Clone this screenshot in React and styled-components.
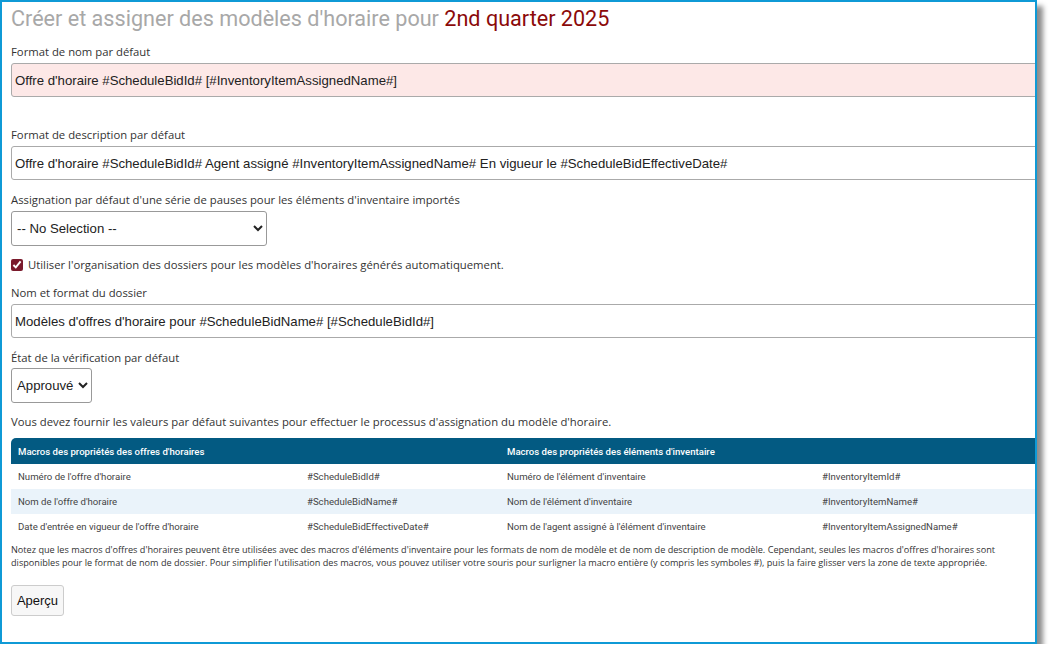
import React from 'react';
import styled, { createGlobalStyle } from 'styled-components';

const GlobalStyle = createGlobalStyle`
  html, body { margin: 0; padding: 0; background: #fff; }
  body { font-family: "Open Sans", "Liberation Sans", sans-serif; color: #333; }
`;

const Frame = styled.div`
  width: 1037px;
  height: 644px;
  box-sizing: border-box;
  border: 2px solid #0f9ad6;
  box-shadow: 6px 6px 5px rgba(0, 0, 0, 0.45);
  overflow: hidden;
  padding: 4px 0 0 9px;
  background: #fff;
`;

const Title = styled.h1`
  margin: 0 0 12px;
  font-family: Roboto, "Liberation Sans", sans-serif;
  font-weight: 400;
  font-size: 21.6px;
  line-height: 26px;
  color: #a8a8a8;
  white-space: nowrap;
`;

const Period = styled.span`
  color: #8b0a0a;
`;

const Field = styled.div`
  display: flex;
  flex-direction: column;
  align-items: flex-start;
  margin-bottom: ${p => p.$space || 12}px;
`;

const Label = styled.label`
  font-size: 11.3px;
  line-height: 16px;
  color: #333;
  margin-bottom: ${p => p.$gap ?? 3}px;
`;

const TextInput = styled.input`
  box-sizing: border-box;
  width: 1060px;
  height: 34px;
  padding: 0 3px;
  font-family: "Liberation Sans", Arial, sans-serif;
  font-size: 13.2px;
  color: #222;
  border: 1px solid #aaa;
  border-radius: 3px;
  background: ${p => (p.$invalid ? '#fde8e7' : '#fff')};
  outline: none;
`;

const Select = styled.select`
  box-sizing: border-box;
  width: ${p => p.$width}px;
  height: 35px;
  padding: 0 1px;
  font-family: "Liberation Sans", Arial, sans-serif;
  font-size: 13.2px;
  color: #222;
  border: 1px solid #999;
  border-radius: 3px;
  background: #fff;
`;

const CheckRow = styled.label`
  display: flex;
  align-items: center;
  gap: 5px;
  font-size: 11.3px;
  line-height: 16px;
  color: #333;
  margin-bottom: 12px;
`;

const Check = styled.input`
  margin: 0;
  width: 12px;
  height: 12px;
  accent-color: #7a1a2c;
`;

const Info = styled.p`
  margin: 0 0 8px;
  font-size: 11.3px;
  line-height: 16px;
  color: #333;
  white-space: nowrap;
`;

const Table = styled.table`
  width: 1040px;
  border-collapse: collapse;
  font-family: Roboto, "Liberation Sans", sans-serif;
  font-size: 9.6px;
  color: #444;
`;

const HeadCell = styled.th`
  background: #035a82;
  color: #fff;
  font-weight: 500;
  text-align: left;
  height: 26px;
  padding: 0 7px;
  &:first-child { border-top-left-radius: 5px; }
`;

const Row = styled.tr`
  background: ${p => (p.$striped ? '#eaf3fa' : '#fff')};
`;

const Cell = styled.td`
  height: 25px;
  padding: 0 7px;
  width: ${p => p.$w}px;
`;

const Note = styled.p`
  margin: 4px 0 16px;
  width: 1005px;
  font-size: 9.15px;
  line-height: 13px;
  color: #333;
`;

const Button = styled.button`
  width: 53px;
  height: 31px;
  padding: 0;
  font-family: "Liberation Sans", Arial, sans-serif;
  font-size: 13px;
  color: #111;
  background: #f7f7f7;
  border: 1px solid #ccc;
  border-radius: 3px;
`;

const rows = [
  ["Numéro de l'offre d'horaire", '#ScheduleBidId#', "Numéro de l'élément d'inventaire", '#InventoryItemId#'],
  ["Nom de l'offre d'horaire", '#ScheduleBidName#', "Nom de l'élément d'inventaire", '#InventoryItemName#'],
  ["Date d'entrée en vigueur de l'offre d'horaire", '#ScheduleBidEffectiveDate#', "Nom de l'agent assigné à l'élément d'inventaire", '#InventoryItemAssignedName#'],
];

export default function App() {
  return (
    <>
      <GlobalStyle />
      <Frame>
        <Title>
          Créer et assigner des modèles d'horaire pour <Period>2nd quarter 2025</Period>
        </Title>

        <Field $space={30}>
          <Label>Format de nom par défaut</Label>
          <TextInput $invalid readOnly value="Offre d'horaire #ScheduleBidId# [#InventoryItemAssignedName#]" />
        </Field>

        <Field>
          <Label>Format de description par défaut</Label>
          <TextInput readOnly value="Offre d'horaire #ScheduleBidId# Agent assigné #InventoryItemAssignedName# En vigueur le #ScheduleBidEffectiveDate#" />
        </Field>

        <Field $space={11}>
          <Label>Assignation par défaut d'une série de pauses pour les éléments d'inventaire importés</Label>
          <Select $width={256} defaultValue="none">
            <option value="none">-- No Selection --</option>
          </Select>
        </Field>

        <CheckRow>
          <Check type="checkbox" defaultChecked />
          Utiliser l'organisation des dossiers pour les modèles d'horaires générés automatiquement.
        </CheckRow>

        <Field>
          <Label>Nom et format du dossier</Label>
          <TextInput readOnly value="Modèles d'offres d'horaire pour #ScheduleBidName# [#ScheduleBidId#]" />
        </Field>

        <Field $space={11}>
          <Label $gap={2}>État de la vérification par défaut</Label>
          <Select $width={81} defaultValue="ok">
            <option value="ok">Approuvé</option>
          </Select>
        </Field>

        <Info>Vous devez fournir les valeurs par défaut suivantes pour effectuer le processus d'assignation du modèle d'horaire.</Info>

        <Table>
          <thead>
            <tr>
              <HeadCell colSpan={2}>Macros des propriétés des offres d'horaires</HeadCell>
              <HeadCell colSpan={2}>Macros des propriétés des éléments d'inventaire</HeadCell>
            </tr>
          </thead>
          <tbody>
            {rows.map((r, i) => (
              <Row key={i} $striped={i === 1}>
                <Cell $w={275}>{r[0]}</Cell>
                <Cell $w={186}>{r[1]}</Cell>
                <Cell $w={301}>{r[2]}</Cell>
                <Cell>{r[3]}</Cell>
              </Row>
            ))}
          </tbody>
        </Table>

        <Note>
          Notez que les macros d'offres d'horaires peuvent être utilisées avec des macros d'éléments d'inventaire pour les formats de nom de modèle et de nom de description de modèle. Cependant, seules les macros d'offres d'horaires sont disponibles pour le format de nom de dossier. Pour simplifier l'utilisation des macros, vous pouvez utiliser votre souris pour surligner la macro entière (y compris les symboles #), puis la faire glisser vers la zone de texte appropriée.
        </Note>

        <Button type="button">Aperçu</Button>
      </Frame>
    </>
  );
}
